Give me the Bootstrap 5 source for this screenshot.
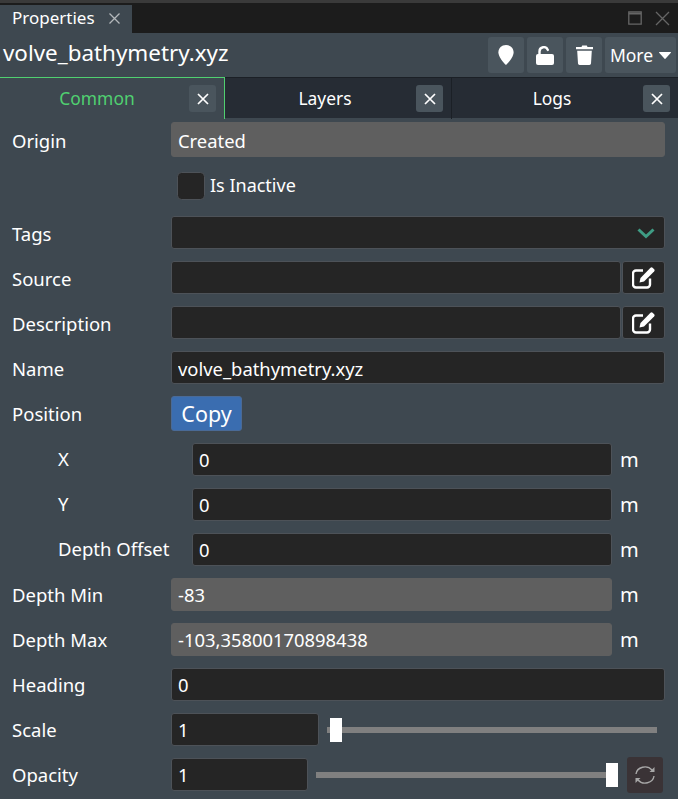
<!DOCTYPE html>
<html lang="en"><head><meta charset="utf-8"><title>Properties</title>
<link href="https://cdn.jsdelivr.net/npm/bootstrap@5.3.0/dist/css/bootstrap.min.css" rel="stylesheet">
<style>
html,body{height:799px;overflow:hidden}
body{background:#3e4850;color:#fff;font-family:"Noto Sans","Open Sans",sans-serif;font-size:18.5px;line-height:1.3}
.top-edge{height:3px;background:#3a3a3a}
.tab-strip{height:30px;background:#1c1c1c}
.dock-tab{width:132px;height:28px;margin-top:2px;background:#3e4850;padding-left:12px;font-size:17px;line-height:26px;gap:13px}
.dock-tab svg{margin-top:7px}
.win-btns{padding-right:8px;gap:13px;color:#666}
.title-bar{height:44px;padding:0 2px 0 3px}
.title-text{font-size:22.4px;line-height:1;margin-top:-3px}
.tool-btn{height:36px;width:36px;padding:0;background:#4a555d;border:0;border-radius:3px;color:#fff;display:flex;align-items:center;justify-content:center}
.tool-more{width:71px;font-size:17.5px;gap:6px}
.tool-more:hover,.tool-btn:hover{background:#4a555d;color:#fff}
.tool-row{gap:3px}
.tab-row{height:41px;background:#262c34;border-top:1px solid #1b2026}
.pane-tab{flex:1 1 0;position:relative;height:41px;line-height:40px;text-align:center;font-size:17.4px;border-right:1px solid #1b2026;padding-right:26px}
.pane-tab.on{flex:0 0 225px;background:#3e4850;color:#50d070;border-top:1px solid #50d070;border-right:1px solid #50d070;margin-top:-1px;height:42px;padding-right:30px}
.pane-tab .shut{position:absolute;right:8px;top:7px;width:27px;height:27px;background:#4a555d;border-radius:3px;display:flex;align-items:center;justify-content:center}
.pane-tab:last-child{border-right:0}
.form-area{padding:4px 13px 0 12px}
.prop-row{display:flex;align-items:center;height:33px;margin-bottom:12px}
.prop-row .form-control{height:33px}
.prop-label{flex:0 0 159px;padding-top:4px}
.copy-row .prop-label,.copy-row ~ .prop-row .prop-label{padding-top:2px}
.sub-label{flex:0 0 180px;padding-left:46px}
.prop-row .form-control,.prop-row .form-select{background:#252525;border:1px solid #4d5258;border-radius:3px;color:#fff;font-size:18.4px;padding:1px 6px 0;box-shadow:none;font-family:inherit}
.copy-row ~ .prop-row .form-control{padding-top:0;padding-bottom:1px}
.prop-row .form-control[readonly]{background:#5f5f5f;border-color:#5f5f5f}
.origin-row{height:35px;margin-bottom:15px}
.origin-row .form-control{height:35px}
.check-row{height:28px;margin-bottom:16px;padding-left:165px;gap:5px;font-size:18px}
.check-box{width:28px;height:28px;background:#252525;border:1px solid #4d5258;border-radius:3px;margin:0;flex:none}
.form-check-input.check-box:focus{box-shadow:none;border-color:#4d5258}
.unit{flex:0 0 53px;padding-left:8px;font-size:20px}
.tags-wrap{position:relative;flex:1}
.tags-wrap svg{position:absolute;right:10px;top:12px}
.edit-btn{flex:none;width:43px;height:33px;margin-left:1px;padding:0;background:#252525;border:1px solid #4d5258;border-radius:3px;display:flex;align-items:center;justify-content:center}
.copy-row{height:35px}
.copy-btn{height:35px;width:71px;padding:0;background:#3a6db0;border:1px solid #4a6a96;border-radius:3px;color:#fff;font-size:21.5px;line-height:1}
.copy-btn:hover{background:#3a6db0;color:#fff}
.slider{flex:1;height:24px;appearance:none;-webkit-appearance:none;background:transparent;margin:0;padding:0}
.slider::-webkit-slider-runnable-track{height:6px;background:#808080}
.slider::-webkit-slider-thumb{-webkit-appearance:none;width:12px;height:24px;margin-top:-9px;background:#fff;border:0;border-radius:0}
.scale-field{flex:0 0 148px}
.opacity-field{flex:0 0 137px}
.scale-slider{margin-left:8px;margin-right:8px;padding-left:0}
.opacity-slider{margin-left:8px;margin-right:9px}
.reload-btn{flex:none;width:36px;height:36px;margin-right:2px;padding:0;background:#3a3336;border:0;border-radius:3px;display:flex;align-items:center;justify-content:center}
</style></head>
<body>
<div class="top-edge"></div>
<div class="tab-strip d-flex justify-content-between">
  <div class="dock-tab d-flex align-items-start">Properties
    <svg width="13" height="13" viewBox="0 0 13 13" fill="none" stroke="#b4b8bb" stroke-width="1.3"><path d="M1.5 1.5l10 10M11.500 1.500l-10 10"/></svg>
  </div>
  <div class="win-btns d-flex align-items-center">
    <svg width="14" height="14" viewBox="0 0 14 14" fill="none" stroke="#666"><path d="M.8.800h12.400v12.400H.8z" stroke-width="1.300"/><path d="M.8 2.500h12.400" stroke-width="2"/></svg>
    <svg width="15" height="15" viewBox="0 0 15 15" fill="none" stroke="#666" stroke-width="1.300"><path d="M1 1l13 13M14 1L1 14"/></svg>
  </div>
</div>
<div class="title-bar d-flex align-items-center justify-content-between">
  <div class="title-text">volve_bathymetry.xyz</div>
  <div class="tool-row d-flex">
    <button class="btn tool-btn" aria-label="Pin"><svg width="16" height="20" viewBox="0 0 16 20" fill="#fff"><path d="M8 0C3.600 0 .4 3.200.4 7.400c0 4 4.600 9.800 7.600 12.600 3-2.800 7.600-8.600 7.600-12.600C15.600 3.200 12.400 0 8 0z"/></svg></button>
    <button class="btn tool-btn" aria-label="Unlock"><svg width="18" height="19" viewBox="0 0 18 19" fill="#fff"><path d="M3.500 8V5.500a4.300 4.300 0 0 1 8.300-1.600" fill="none" stroke="#fff" stroke-width="2.400" stroke-linecap="round"/><path d="M2 8h14a2 2 0 0 1 2 2v7a2 2 0 0 1-2 2H2a2 2 0 0 1-2-2v-7a2 2 0 0 1 2-2z"/></svg></button>
    <button class="btn tool-btn" aria-label="Delete"><svg width="17" height="20" viewBox="0 0 17 20" fill="#fff"><path d="M0 2h5.500L6.200.5h4.600L11.500 2H17v2.200H0zM1.200 5.800h14.600L15 18.500a1.600 1.600 0 0 1-1.600 1.500H3.600A1.600 1.600 0 0 1 2 18.500z"/></svg></button>
    <button class="btn tool-btn tool-more">More<svg width="12" height="7" viewBox="0 0 12 7" fill="#fff"><path d="M.5 0h11a.5.500 0 0 1 .4.800L6.400 6.700a.5.500 0 0 1-.8 0L.1.800A.5.500 0 0 1 .5 0z"/></svg></button>
  </div>
</div>
<div class="tab-row d-flex">
  <div class="pane-tab on">Common<span class="shut"><svg width="12" height="12" viewBox="0 0 12 12" stroke="#fff" stroke-width="1.700"><path d="M1 1l10 10M11 1L1 11"/></svg></span></div>
  <div class="pane-tab">Layers<span class="shut"><svg width="12" height="12" viewBox="0 0 12 12" stroke="#fff" stroke-width="1.700"><path d="M1 1l10 10M11 1L1 11"/></svg></span></div>
  <div class="pane-tab">Logs<span class="shut"><svg width="12" height="12" viewBox="0 0 12 12" stroke="#fff" stroke-width="1.700"><path d="M1 1l10 10M11 1L1 11"/></svg></span></div>
</div>
<div class="form-area">
  <div class="prop-row origin-row"><span class="prop-label">Origin</span><input class="form-control" readonly value="Created"></div>
  <div class="prop-row check-row"><input class="form-check-input check-box" type="checkbox" id="inactive"><label for="inactive">Is Inactive</label></div>
  <div class="prop-row"><span class="prop-label">Tags</span><div class="tags-wrap"><input class="form-control"><svg width="18" height="11" viewBox="0 0 18 11" fill="none" stroke="#3f9c84" stroke-width="3"><path d="M1.500 1.500L9 8.500l7.500-7"/></svg></div></div>
  <div class="prop-row"><span class="prop-label">Source</span><input class="form-control"><button class="btn edit-btn" aria-label="Edit"><svg width="23" height="22" viewBox="0 0 23 22" fill="none"><path d="M11 3.500H4a3 3 0 0 0-3 3v11a3 3 0 0 0 3 3h11a3 3 0 0 0 3-3v-6" stroke="#fff" stroke-width="2.400"/><path d="M18.500.8a1.500 1.500 0 0 1 2.100 0l1.500 1.500a1.500 1.500 0 0 1 0 2.100L12 14.500l-4.500 1 1-4.500z" fill="#fff"/></svg></button></div>
  <div class="prop-row"><span class="prop-label">Description</span><input class="form-control"><button class="btn edit-btn" aria-label="Edit"><svg width="23" height="22" viewBox="0 0 23 22" fill="none"><path d="M11 3.500H4a3 3 0 0 0-3 3v11a3 3 0 0 0 3 3h11a3 3 0 0 0 3-3v-6" stroke="#fff" stroke-width="2.400"/><path d="M18.500.8a1.500 1.500 0 0 1 2.100 0l1.500 1.500a1.500 1.500 0 0 1 0 2.100L12 14.500l-4.500 1 1-4.500z" fill="#fff"/></svg></button></div>
  <div class="prop-row"><span class="prop-label">Name</span><input class="form-control" value="volve_bathymetry.xyz"></div>
  <div class="prop-row copy-row"><span class="prop-label">Position</span><button class="btn copy-btn">Copy</button></div>
  <div class="prop-row"><span class="sub-label">X</span><input class="form-control" value="0"><span class="unit">m</span></div>
  <div class="prop-row"><span class="sub-label">Y</span><input class="form-control" value="0"><span class="unit">m</span></div>
  <div class="prop-row"><span class="sub-label">Depth Offset</span><input class="form-control" value="0"><span class="unit">m</span></div>
  <div class="prop-row"><span class="prop-label">Depth Min</span><input class="form-control" readonly value="-83"><span class="unit">m</span></div>
  <div class="prop-row"><span class="prop-label">Depth Max</span><input class="form-control" readonly value="-103,35800170898438"><span class="unit">m</span></div>
  <div class="prop-row"><span class="prop-label">Heading</span><input class="form-control" value="0"></div>
  <div class="prop-row"><span class="prop-label">Scale</span><div class="scale-field"><input class="form-control" value="1"></div><input class="slider scale-slider" type="range" min="0" max="100" value="1" aria-label="Scale"></div>
  <div class="prop-row"><span class="prop-label">Opacity</span><div class="opacity-field"><input class="form-control" value="1"></div><input class="slider opacity-slider" type="range" min="0" max="1" step="0.01" value="1" aria-label="Opacity"><button class="btn reload-btn" aria-label="Reset"><svg width="22" height="20" viewBox="0 0 22 20" fill="none" stroke="#a8a8a8" stroke-width="1.400"><path d="M2 9a9 8 0 0 1 16-4"/><path d="M20 11a9 8 0 0 1-16 4"/><path d="M20.500 2v5h-5z" fill="#a8a8a8" stroke="none"/><path d="M1.500 18v-5h5z" fill="#a8a8a8" stroke="none"/></svg></button></div>
</div>
<script src="https://cdn.jsdelivr.net/npm/bootstrap@5.3.0/dist/js/bootstrap.bundle.min.js"></script>
</body></html>
